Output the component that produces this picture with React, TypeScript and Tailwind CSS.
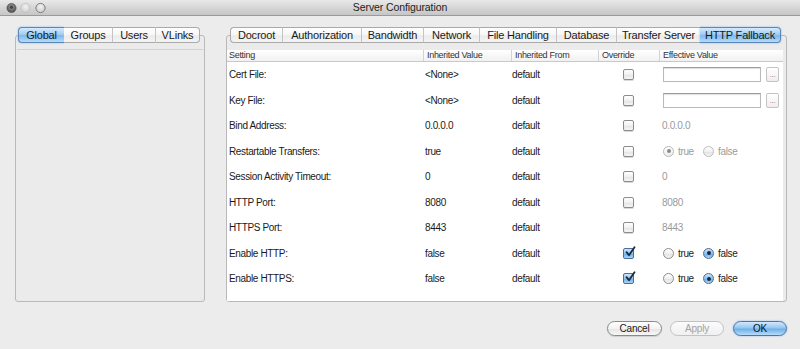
type Eff =
  | { kind: "file" }
  | { kind: "text"; value: string }
  | { kind: "radio"; value: boolean; disabled: boolean };

type Row = { name: string; inherited: string; override: boolean; eff: Eff };

const rows: Row[] = [
  { name: "Cert File:", inherited: "<None>", override: false, eff: { kind: "file" } },
  { name: "Key File:", inherited: "<None>", override: false, eff: { kind: "file" } },
  { name: "Bind Address:", inherited: "0.0.0.0", override: false, eff: { kind: "text", value: "0.0.0.0" } },
  { name: "Restartable Transfers:", inherited: "true", override: false, eff: { kind: "radio", value: true, disabled: true } },
  { name: "Session Activity Timeout:", inherited: "0", override: false, eff: { kind: "text", value: "0" } },
  { name: "HTTP Port:", inherited: "8080", override: false, eff: { kind: "text", value: "8080" } },
  { name: "HTTPS Port:", inherited: "8443", override: false, eff: { kind: "text", value: "8443" } },
  { name: "Enable HTTP:", inherited: "false", override: true, eff: { kind: "radio", value: false, disabled: false } },
  { name: "Enable HTTPS:", inherited: "false", override: true, eff: { kind: "radio", value: false, disabled: false } },
];

const leftTabs = [
  { label: "Global", w: "w-[46px]" },
  { label: "Groups", w: "w-[48px]" },
  { label: "Users", w: "w-[43px]" },
  { label: "VLinks", w: "w-[45px]" },
];

const rightTabs = [
  { label: "Docroot", w: "w-[52px]" },
  { label: "Authorization", w: "w-[79px]" },
  { label: "Bandwidth", w: "w-[62px]" },
  { label: "Network", w: "w-[56px]" },
  { label: "File Handling", w: "w-[77px]" },
  { label: "Database", w: "w-[60px]" },
  { label: "Transfer Server", w: "w-[84px]" },
  { label: "HTTP Fallback", w: "w-[81px]" },
];

function Tabs({ tabs, selected }: { tabs: { label: string; w: string }[]; selected: number }) {
  return (
    <div className="relative z-10 flex h-[16px]">
      {tabs.map((t, i) => {
        const first = i === 0;
        const last = i === tabs.length - 1;
        const sel = i === selected;
        return (
          <div
            key={t.label}
            className={[
              "flex h-full items-center justify-center text-[11px] tracking-[-0.2px] text-[#1a1a1a]",
              t.w,
              "border-y",
              first ? "rounded-l-[4px] border-l" : "",
              last ? "rounded-r-[4px] border-r" : "",
              !first && !sel && i - 1 !== selected ? "border-l border-l-[#c4c4c4]" : "",
              sel
                ? "border-[#5a86b8] bg-[linear-gradient(to_bottom,#d6eafc,#a2cdf3_45%,#7db9ee_55%,#b6dbfa)] shadow-[0_0_2px_#7fb2e5] font-medium"
                : "border-y-[#a9a9a9] bg-[linear-gradient(to_bottom,#ffffff,#f6f6f6_50%,#ebebeb_55%,#f4f4f4)]",
              first && !sel ? "border-l-[#a9a9a9]" : "",
              last && !sel ? "border-r-[#a9a9a9]" : "",
            ].join(" ")}
          >
            {t.label}
          </div>
        );
      })}
    </div>
  );
}

function Checkbox({ checked }: { checked: boolean }) {
  if (checked) {
    return (
      <div className="relative h-[11px] w-[11px] rounded-[2px] border border-[#4a6d99] bg-[linear-gradient(to_bottom,#cfe5fa,#8ec2ef_50%,#6eaee8_55%,#aad5f8)]">
        <svg viewBox="0 0 12 12" className="absolute -top-[3px] left-0 h-[12px] w-[12px]">
          <path d="M2.5 6.2 L5 9.2 L10.5 1.2" fill="none" stroke="#1b2a40" strokeWidth="1.8" strokeLinecap="round" strokeLinejoin="round" />
        </svg>
      </div>
    );
  }
  return (
    <div className="h-[11px] w-[11px] rounded-[2px] border border-[#8c8c8c] bg-[linear-gradient(to_bottom,#ffffff,#f1f1f1_50%,#e4e4e4_55%,#f6f6f6)] shadow-[0_1px_0_#d8d8d8]" />
  );
}

function Radio({ on, disabled }: { on: boolean; disabled: boolean }) {
  if (on) {
    return (
      <div
        className={[
          "flex h-[11px] w-[11px] items-center justify-center rounded-full border",
          disabled
            ? "border-[#b8b8b8] bg-[linear-gradient(to_bottom,#ffffff,#eeeeee)]"
            : "border-[#4a6d99] bg-[linear-gradient(to_bottom,#cfe5fa,#8ec2ef_50%,#6eaee8_55%,#aad5f8)]",
        ].join(" ")}
      >
        <div className={["h-[4px] w-[4px] rounded-full", disabled ? "bg-[#8a8a8a]" : "bg-[#1b2a40]"].join(" ")} />
      </div>
    );
  }
  return (
    <div
      className={[
        "h-[11px] w-[11px] rounded-full border bg-[linear-gradient(to_bottom,#ffffff,#f0f0f0_50%,#e2e2e2_55%,#f6f6f6)]",
        disabled ? "border-[#bdbdbd]" : "border-[#8c8c8c]",
      ].join(" ")}
    />
  );
}

function Effective({ eff }: { eff: Eff }) {
  if (eff.kind === "file") {
    return (
      <div className="flex items-center pl-[4px]">
        <div className="h-[15px] w-[98px] border border-[#b9b9b9] border-t-[#9c9c9c] bg-white shadow-[inset_0_1px_1px_#e0e0e0]" />
        <div className="ml-[5px] flex h-[15px] w-[13px] items-end justify-center rounded-[2px] border border-[#c4c4c4] bg-[linear-gradient(to_bottom,#ffffff,#eeeeee)] pb-[2px] text-[8px] leading-none text-[#888]">
          ...
        </div>
      </div>
    );
  }
  if (eff.kind === "text") {
    return <div className="pl-[3px] text-[#9a9a9a]">{eff.value}</div>;
  }
  const color = eff.disabled ? "text-[#9a9a9a]" : "text-[#1a1a1a]";
  return (
    <div className="flex items-center pl-[4px]">
      <Radio on={eff.value} disabled={eff.disabled} />
      <span className={`ml-[4px] w-[25px] ${color}`}>true</span>
      <Radio on={!eff.value} disabled={eff.disabled} />
      <span className={`ml-[4px] ${color}`}>false</span>
    </div>
  );
}

function TrafficLights() {
  return (
    <svg width="50" height="14" viewBox="0 0 50 14" className="ml-[6px]">
      <defs>
        <radialGradient id="dk" cx="50%" cy="35%" r="60%">
          <stop offset="0%" stopColor="#9a9a9a" />
          <stop offset="100%" stopColor="#555" />
        </radialGradient>
        <radialGradient id="lt" cx="50%" cy="35%" r="60%">
          <stop offset="0%" stopColor="#f2f2f2" />
          <stop offset="100%" stopColor="#cfcfcf" />
        </radialGradient>
      </defs>
      <circle cx="5.5" cy="7" r="4.6" fill="url(#dk)" stroke="#4a4a4a" strokeWidth="0.6" />
      <circle cx="5.5" cy="6.2" r="1.6" fill="#444" />
      <circle cx="19.5" cy="7" r="4.6" fill="url(#lt)" stroke="#b8b8b8" strokeWidth="0.6" />
      <circle cx="34.5" cy="7" r="4.6" fill="url(#lt)" stroke="#7d7d7d" strokeWidth="1" />
    </svg>
  );
}

export default function App() {
  return (
    <div className="flex h-[349px] w-[800px] flex-col overflow-hidden bg-[#ececec] font-['Liberation_Sans',Arial,sans-serif] text-[#1a1a1a]">
      {/* title bar */}
      <div className="relative flex h-[16px] items-center border-b border-[#9a9a9a] bg-[linear-gradient(to_bottom,#e9e9e9,#d6d6d6_50%,#c6c6c6)]">
        <TrafficLights />
        <div className="absolute inset-0 flex items-center justify-center text-[10.5px] tracking-[-0.1px] text-[#222]">
          Server Configuration
        </div>
      </div>

      <div className="flex gap-[21px] pl-[15px] pt-[11px]">
        {/* left panel */}
        <div className="flex w-[190px] flex-col">
          <div className="pl-[3px]">
            <Tabs tabs={leftTabs} selected={0} />
          </div>
          <div className="-mt-[8px] flex h-[267px] flex-col rounded-[3px] border border-[#b9b9b9] bg-[#ebebeb] px-[1px] pt-[13px] pb-[1px]">
            <div className="flex-1 border-t border-[#d2d2d2]" />
          </div>
        </div>

        {/* right panel */}
        <div className="flex w-[561px] flex-col">
          <div className="pl-[4px]">
            <Tabs tabs={rightTabs} selected={7} />
          </div>
          <div className="-mt-[8px] flex h-[267px] flex-col rounded-[3px] border border-[#b9b9b9] bg-[#ebebeb] pt-[14px] pr-[3px]">
            <div className="flex-1 bg-white text-[10px] tracking-[-0.35px]">
              <div className="grid h-[12px] grid-cols-[196px_88px_87px_61px_1fr] border-b border-[#c9c9c9] bg-[linear-gradient(to_bottom,#ffffff,#f1f1f1)] text-[9px] leading-[11px] tracking-[-0.3px] text-[#333]">
                <div className="pl-[2px]">Setting</div>
                <div className="border-l border-[#d2d2d2] pl-[3px]">Inherited Value</div>
                <div className="border-l border-[#d2d2d2] pl-[3px]">Inherited From</div>
                <div className="border-l border-[#d2d2d2] pl-[3px]">Override</div>
                <div className="border-l border-[#d2d2d2] pl-[3px]">Effective Value</div>
              </div>
              {rows.map((r) => (
                <div key={r.name} className="grid h-[25.5px] grid-cols-[196px_88px_87px_61px_1fr] items-center">
                  <div className="pl-[2px]">{r.name}</div>
                  <div className="pl-[2px]">{r.inherited}</div>
                  <div className="pl-[1px]">default</div>
                  <div className="flex justify-center">
                    <Checkbox checked={r.override} />
                  </div>
                  <Effective eff={r.eff} />
                </div>
              ))}
            </div>
          </div>
        </div>
      </div>

      {/* buttons */}
      <div className="mt-[19px] flex justify-end gap-[8px] pr-[13px] text-[10px] tracking-[-0.2px]">
        <button className="flex h-[15px] w-[55px] items-center justify-center rounded-full border border-[#8a8a8a] bg-[linear-gradient(to_bottom,#ffffff,#f3f3f3_50%,#e6e6e6_55%,#f8f8f8)] text-[#1a1a1a] shadow-[0_1px_1px_#cfcfcf]">
          Cancel
        </button>
        <button className="flex h-[15px] w-[54px] items-center justify-center rounded-full border border-[#c2c2c2] bg-[linear-gradient(to_bottom,#fbfbfb,#f0f0f0)] text-[#a3a3a3]">
          Apply
        </button>
        <button className="ml-[1px] flex h-[15px] w-[54px] items-center justify-center rounded-full border border-[#4c74a6] bg-[linear-gradient(to_bottom,#d3e9fc,#95c7f1_45%,#6fb1ea_55%,#b7dcfa)] font-medium text-[#111] shadow-[0_0_2px_#8ab8e6]">
          OK
        </button>
      </div>
    </div>
  );
}
